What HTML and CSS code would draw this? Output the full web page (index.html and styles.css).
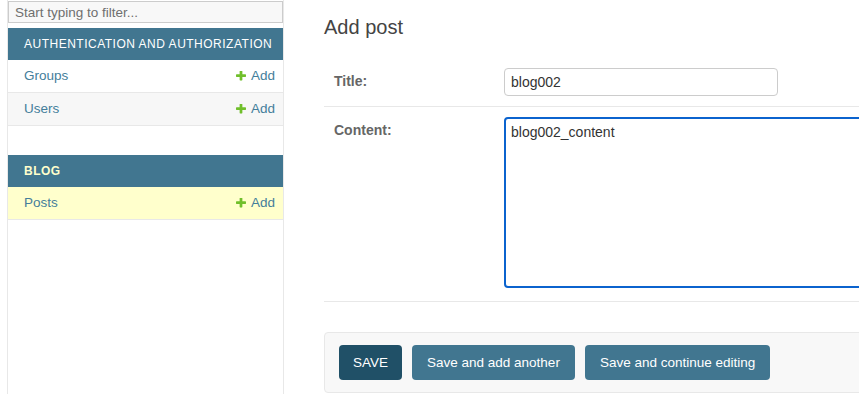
FILE: index.html
```html
<!DOCTYPE html>
<html lang="en">
<head>
    <meta charset="UTF-8">
    <meta name="viewport" content="width=device-width, initial-scale=1.0">
    <title>Add post | Django site admin</title>
    <link rel="stylesheet" href="styles.css">
</head>
<body>
    <div class="page">
        <div class="nav-toggle"></div>

        <nav class="sidebar">
            <input type="text" class="nav-filter" placeholder="Start typing to filter...">

            <div class="app">
                <div class="app-caption">Authentication and Authorization</div>
                <div class="model-row">
                    <a class="model-link" href="#">Groups</a>
                    <a class="addlink" href="#">
                        <svg class="add-icon" viewBox="192 192 1408 1408"><path d="M1600 736v192q0 40-28 68t-68 28h-416v416q0 40-28 68t-68 28h-192q-40 0-68-28t-28-68v-416h-416q-40 0-68-28t-28-68v-192q0-40 28-68t68-28h416v-416q0-40 28-68t68-28h192q40 0 68 28t28 68v416h416q40 0 68 28t28 68z"/></svg>
                        Add
                    </a>
                </div>
                <div class="model-row alt">
                    <a class="model-link" href="#">Users</a>
                    <a class="addlink" href="#">
                        <svg class="add-icon" viewBox="192 192 1408 1408"><path d="M1600 736v192q0 40-28 68t-68 28h-416v416q0 40-28 68t-68 28h-192q-40 0-68-28t-28-68v-416h-416q-40 0-68-28t-28-68v-192q0-40 28-68t68-28h416v-416q0-40 28-68t68-28h192q40 0 68 28t28 68v416h416q40 0 68 28t28 68z"/></svg>
                        Add
                    </a>
                </div>
            </div>

            <div class="app current-app">
                <div class="app-caption">Blog</div>
                <div class="model-row current-model">
                    <a class="model-link" href="#">Posts</a>
                    <a class="addlink" href="#">
                        <svg class="add-icon" viewBox="192 192 1408 1408"><path d="M1600 736v192q0 40-28 68t-68 28h-416v416q0 40-28 68t-68 28h-192q-40 0-68-28t-28-68v-416h-416q-40 0-68-28t-28-68v-192q0-40 28-68t68-28h416v-416q0-40 28-68t68-28h192q40 0 68 28t28 68v416h416q40 0 68 28t28 68z"/></svg>
                        Add
                    </a>
                </div>
            </div>
        </nav>

        <main class="main">
            <div class="content">
                <h1>Add post</h1>

                <form>
                    <div class="form-row">
                        <label for="id_title">Title:</label>
                        <input type="text" id="id_title" class="text-field" value="blog002">
                    </div>
                    <div class="form-row">
                        <label for="id_content">Content:</label>
                        <textarea id="id_content" class="text-area">blog002_content</textarea>
                    </div>

                    <div class="submit-row">
                        <button type="button" class="btn btn-default">SAVE</button>
                        <button type="button" class="btn">Save and add another</button>
                        <button type="button" class="btn">Save and continue editing</button>
                    </div>
                </form>
            </div>
        </main>
    </div>
</body>
</html>
```

FILE: styles.css
```css
:root {
    --primary: #417690;
    --default-button: #205067;
    --link: #447e9b;
    --hairline: #e8e8e8;
    --border: #ccc;
    --selected-row: #ffc;
    --add-green: #70bf2b;
}

body {
    margin: 0;
    font-family: 'Liberation Sans', Arial, sans-serif;
    color: #333;
    background: white;
    overflow: hidden;
}

.page {
    display: flex;
    min-height: 100vh;
}

.nav-toggle {
    flex: 0 0 7px;
    border-right: 1px solid var(--hairline);
}

/* sidebar */

.sidebar {
    flex: 0 0 275px;
    border-right: 1px solid var(--hairline);
}

.nav-filter {
    display: block;
    box-sizing: border-box;
    width: 100%;
    height: 22px;
    margin: 1px 0 5px;
    padding: 2px 6px;
    border: 1px solid var(--border);
    background: #f8f8f8;
    font-family: inherit;
    font-size: 13.5px;
    outline: none;
}

.nav-filter::placeholder {
    color: #6f6f6f;
}

.app {
    margin-bottom: 29px;
}

.app-caption {
    padding: 8px 8px 8px 16px;
    background: var(--primary);
    color: white;
    font-size: 12px;
    line-height: 16px;
    letter-spacing: 0.5px;
    text-transform: uppercase;
}

.current-app .app-caption {
    color: #ffc;
    font-weight: bold;
}

.model-row {
    display: flex;
    justify-content: space-between;
    align-items: center;
    padding: 8px 8px 8px 16px;
    border-bottom: 1px solid var(--hairline);
    font-size: 13.5px;
    line-height: 16px;
}

.model-row.alt {
    background: #f7f7f7;
}

.model-row.current-model {
    background: var(--selected-row);
}

.model-link,
.addlink {
    color: var(--link);
    text-decoration: none;
}

.addlink {
    display: flex;
    align-items: center;
    gap: 5px;
}

.add-icon {
    width: 10px;
    height: 10px;
    fill: var(--add-green);
}

/* main content */

.main {
    flex: 1;
    min-width: 0;
    overflow: hidden;
}

.content {
    width: 900px;
    padding: 16px 0 0 40px;
}

h1 {
    margin: 0 0 19px;
    font-size: 20px;
    font-weight: 300;
    line-height: 23px;
    color: #444;
}

.form-row {
    display: flex;
    align-items: flex-start;
    padding: 10px;
    border-bottom: 1px solid var(--hairline);
}

.form-row label {
    width: 160px;
    padding: 5px 10px 0 0;
    color: #666;
    font-size: 14px;
    font-weight: bold;
    line-height: 16px;
}

.text-field,
.text-area {
    box-sizing: border-box;
    margin: 0;
    font-family: inherit;
    font-size: 14px;
    line-height: 16px;
    color: #333;
    border-radius: 4px;
}

.text-field {
    width: 274px;
    height: 28px;
    padding: 5px 6px;
    border: 1px solid var(--border);
}

.text-area {
    display: block;
    width: 610px;
    height: 171px;
    margin-bottom: 3px;
    padding: 5px 5px;
    border: 2px solid #0b63ce;
    outline: none;
    resize: none;
}

.submit-row {
    display: flex;
    gap: 10px;
    margin-top: 30px;
    padding: 12px 14px;
    border: 1px solid var(--hairline);
    border-radius: 4px;
    background: #f8f8f8;
}

.btn {
    height: 35px;
    padding: 0 15px;
    border: none;
    border-radius: 4px;
    background: var(--primary);
    color: white;
    font-family: inherit;
    font-size: 13.5px;
    cursor: pointer;
}

.btn-default {
    background: var(--default-button);
    padding: 0 14px;
}
```
